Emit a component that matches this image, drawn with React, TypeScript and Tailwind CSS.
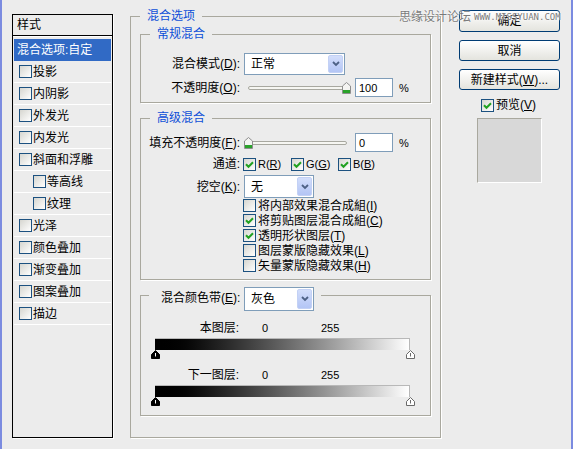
import React from "react";

const styles: [string, number, boolean][] = [
  ["投影", 0, false],
  ["内阴影", 0, false],
  ["外发光", 0, false],
  ["内发光", 0, false],
  ["斜面和浮雕", 0, false],
  ["等高线", 1, false],
  ["纹理", 1, false],
  ["光泽", 0, false],
  ["颜色叠加", 0, false],
  ["渐变叠加", 0, false],
  ["图案叠加", 0, false],
  ["描边", 0, false],
];

function Check({ on = false }: { on?: boolean }) {
  return (
    <span className="flex h-[13px] w-[13px] shrink-0 items-center justify-center border border-[#1c5180] bg-gradient-to-br from-[#d6d6d0] to-white">
      {on && (
        <svg width="9" height="9" viewBox="0 0 9 9">
          <path d="M1 4.2 L3.5 6.8 L8 2.2" fill="none" stroke="#21a121" strokeWidth="2" />
        </svg>
      )}
    </span>
  );
}

function Select({ value, className }: { value: string; className: string }) {
  return (
    <div className={`flex shrink-0 border border-[#7f9db9] bg-white ${className}`}>
      <span className="flex flex-1 items-center pl-[6px] text-[12px]">{value}</span>
      <span className="m-[1px] flex w-[15px] items-center justify-center rounded-[2px] border border-[#c3d1f5] bg-gradient-to-b from-[#d3defb] to-[#b3c5f5]">
        <svg width="8" height="6" viewBox="0 0 8 6">
          <path d="M1 1 L4 4 L7 1" fill="none" stroke="#4d6185" strokeWidth="1.8" />
        </svg>
      </span>
    </div>
  );
}

function Thumb() {
  return (
    <svg width="9" height="12" viewBox="0 0 9 12">
      <path d="M4.5 0.5 L8.5 4 L8.5 11.5 L0.5 11.5 L0.5 4 Z" fill="#f4f4f2" stroke="#8e8e8e" />
      <rect x="1" y="8" width="7" height="3" fill="#2aa22a" />
    </svg>
  );
}

function Slider({ right }: { right?: boolean }) {
  return (
    <div className="relative flex h-[12px] w-[107px] shrink-0 items-center">
      <div className="mx-[4px] h-[4px] flex-1 rounded-full border border-[#a8a8a0] bg-[#f6f6f2]" />
      <span className={right ? "absolute right-0 top-0 flex" : "absolute left-0 top-0 flex"}>
        <Thumb />
      </span>
    </div>
  );
}

function Pct({ value }: { value: string }) {
  return (
    <>
      <span className="ml-[4px] flex h-[19px] w-[38px] items-center border border-[#7f9db9] bg-white pl-[3px] text-[11px]">
        {value}
      </span>
      <span className="ml-[6px] text-[11px]">%</span>
    </>
  );
}

function Marker({ dark }: { dark?: boolean }) {
  return (
    <svg width="9" height="9" viewBox="0 0 9 9">
      <path
        d="M4.5 0.5 L8.5 4.5 L8.5 8.5 L0.5 8.5 L0.5 4.5 Z"
        fill={dark ? "#000" : "#fff"}
        stroke={dark ? "#000" : "#6a6a6a"}
      />
      <path d="M4.5 3 L4.5 6.5" stroke={dark ? "#fff" : "#6a6a6a"} />
    </svg>
  );
}

function Band({ label }: { label: string }) {
  return (
    <>
      <div className="flex h-[14px] items-center text-[11px]">
        <span className="w-[98px] text-right text-[12px]">{label}:</span>
        <span className="ml-[23px] w-[59px]">0</span>
        <span>255</span>
      </div>
      <div className="ml-[14px] mt-[3px] h-[12px] w-[255px] border-t border-r border-[#b8b8b8] bg-gradient-to-r from-black to-white" />
      <div className="ml-[10px] flex w-[264px] justify-between">
        <Marker dark />
        <Marker />
      </div>
    </>
  );
}

const frame = "border border-[#a9a89e] shadow-[1px_1px_0_#fff]";
const legendText = "text-[12px] text-[#0c4fd8]";

export default function App() {
  return (
    <div className="relative flex h-[449px] w-[573px] overflow-hidden bg-[#ececec] font-['Liberation_Sans','Noto_Sans_CJK_SC',sans-serif] text-[12px] leading-[16px] text-black">
      <div className="w-[2px] shrink-0 bg-[#7b8be0]" />

      {/* style list */}
      <div className="ml-[10px] mt-[14px] flex h-[424px] w-[101px] shrink-0 flex-col border border-black shadow-[1px_1px_0_#fff]">
        <div className="flex h-[21px] items-center border-b border-black pl-[4px]">样式</div>
        <div className="h-[3px] border-t border-white" />
        <div className="px-[1px]">
          <div className="flex h-[22px] items-center bg-[#316ac5] pl-[3px] text-white">混合选项:自定</div>
          {styles.map(([name, indent, on]) => (
            <div key={name} className="flex h-[22px] items-center gap-[1px] border-b border-white">
              <span className={indent ? "ml-[19px]" : "ml-[5px]"}>
                <Check on={on} />
              </span>
              <span>{name}</span>
            </div>
          ))}
        </div>
      </div>

      {/* main options */}
      <fieldset className={`ml-[17px] mt-[8px] h-[430px] w-[311px] shrink-0 pl-[9px] ${frame}`}>
        <legend className={`px-[7px] ${legendText}`}>混合选项</legend>

        <fieldset className={`mt-[2px] h-[77px] w-[291px] ${frame}`}>
          <legend className={`ml-[9px] px-[7px] ${legendText}`}>常规混合</legend>
          <div className="mt-[11px] flex h-[22px] items-center">
            <span className="w-[99px] text-right">
              混合模式(<u>D</u>):
            </span>
            <Select value="正常" className="ml-[4px] h-[22px] w-[101px]" />
          </div>
          <div className="mt-[3px] flex h-[19px] items-center">
            <span className="w-[99px] text-right">
              不透明度(<u>O</u>):
            </span>
            <span className="ml-[4px]">
              <Slider right />
            </span>
            <Pct value="100" />
          </div>
        </fieldset>

        <fieldset className={`mt-[7px] h-[170px] w-[291px] ${frame}`}>
          <legend className={`ml-[9px] px-[7px] ${legendText}`}>高级混合</legend>
          <div className="mt-[7px] flex h-[19px] items-center">
            <span className="w-[99px] text-right">
              填充不透明度(<u>F</u>):
            </span>
            <span className="ml-[4px]">
              <Slider />
            </span>
            <Pct value="0" />
          </div>
          <div className="mt-[5px] flex h-[14px] items-center">
            <span className="w-[99px] text-right">通道:</span>
            <span className="ml-[3px] flex w-[48px] items-center gap-[2px]">
              <Check on />
              <span className="text-[11px]">
                R(<u>R</u>)
              </span>
            </span>
            <span className="flex w-[47px] items-center gap-[2px]">
              <Check on />
              <span className="text-[11px]">
                G(<u>G</u>)
              </span>
            </span>
            <span className="flex items-center gap-[2px]">
              <Check on />
              <span className="text-[11px]">
                B(<u>B</u>)
              </span>
            </span>
          </div>
          <div className="mt-[4px] flex h-[23px] items-center">
            <span className="w-[99px] text-right">
              挖空(<u>K</u>):
            </span>
            <Select value="无" className="ml-[4px] h-[23px] w-[70px]" />
          </div>
          {[
            ["将内部效果混合成組", "I", false],
            ["将剪贴图层混合成組", "C", true],
            ["透明形状图层", "T", true],
            ["图层蒙版隐藏效果", "L", false],
            ["矢量蒙版隐藏效果", "H", false],
          ].map(([text, key, on]) => (
            <div key={text as string} className="ml-[102px] flex h-[15px] items-center gap-[2px]">
              <Check on={on as boolean} />
              <span>
                {text}(<u>{key}</u>)
              </span>
            </div>
          ))}
        </fieldset>

        <fieldset className={`mt-[7px] h-[129px] w-[291px] ${frame}`}>
          <legend className="ml-[8px] flex h-[16px] items-start pl-[12px] pr-[7px]">
            <span className="mt-[3px] w-[83px]">
              混合颜色带(<u>E</u>):
            </span>
            <Select value="灰色" className="h-[24px] w-[70px]" />
          </legend>
          <div className="mt-[18px]">
            <Band label="本图层" />
          </div>
          <div className="mt-[9px]">
            <Band label="下一图层" />
          </div>
        </fieldset>
      </fieldset>

      {/* buttons + preview */}
      <div className="ml-[18px] mt-[10px] flex w-[101px] shrink-0 flex-col">
        <div className="flex flex-col gap-[8px]">
          <button className="h-[22px] w-full rounded-[3px] border border-[#003c74] bg-gradient-to-b from-white to-[#e4e4de]">确定</button>
          <button className="h-[21px] w-full rounded-[3px] border border-[#003c74] bg-gradient-to-b from-white to-[#e4e4de]">取消</button>
          <button className="h-[21px] w-full rounded-[3px] border border-[#003c74] bg-gradient-to-b from-white to-[#e4e4de]">
            新建样式(<u>W</u>)...
          </button>
        </div>
        <div className="ml-[22px] mt-[8px] flex h-[14px] items-center gap-[2px]">
          <Check on />
          <span>
            预览(<u>V</u>)
          </span>
        </div>
        <div className="ml-[18px] mt-[6px] h-[65px] w-[65px] border border-[#a9a89e] border-b-white border-r-white bg-[#d8d8d8]" />
      </div>

      <div className="ml-auto w-[2px] shrink-0 bg-[#7b8be0]" />

      {/* watermark */}
      <div className="absolute left-[399px] top-[9px] flex items-center gap-[3px] text-[#7a7a7a] [text-shadow:0_0_2px_#fff,0_0_1px_#fff]">
        <span className="text-[12px]">思缘设计论坛</span>
        <span className="font-['DejaVu_Sans_Mono',monospace] text-[9px]">WWW.MISSYUAN.COM</span>
      </div>
    </div>
  );
}
